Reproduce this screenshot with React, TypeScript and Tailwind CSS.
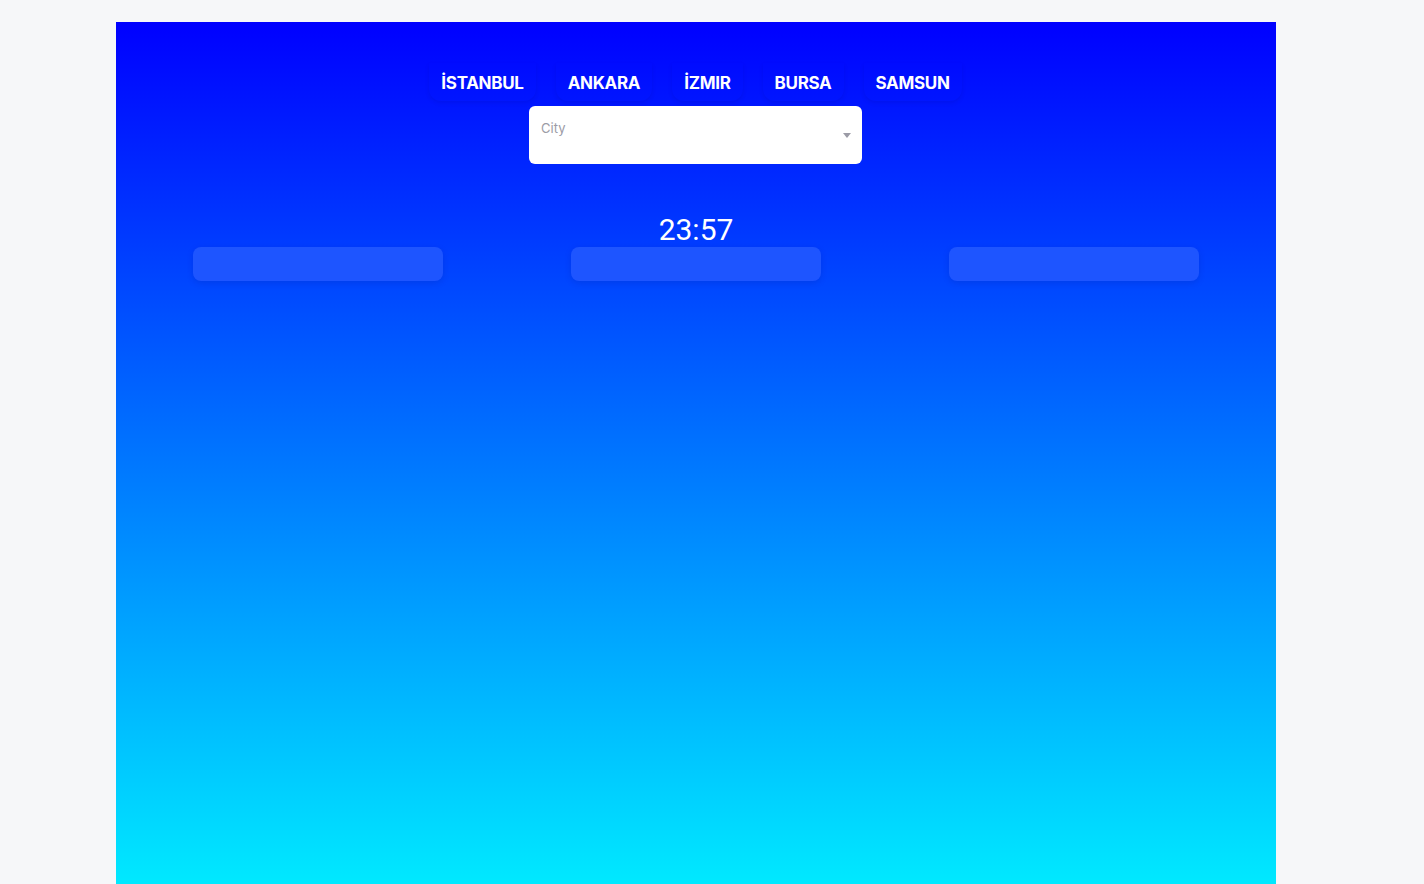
const cities = ["İSTANBUL", "ANKARA", "İZMIR", "BURSA", "SAMSUN"];

function CityTabs() {
    return (
        <div className="flex items-end justify-center gap-[20px]">
            {cities.map((city) => (
                <button
                    key={city}
                    className="rounded-b-xl px-[12px] pt-[8px] pb-[6px] text-[17px] font-bold leading-[24px] tracking-[-0.3px] text-white shadow-[0_2px_4px_rgba(0,0,90,0.1)]"
                >
                    {city}
                </button>
            ))}
        </div>
    );
}

function CitySelect() {
    return (
        <div className="relative mt-[5px] h-[58px] w-[333px] rounded-md bg-white">
            <span className="absolute left-[12px] top-[14px] text-[13px] leading-[16px] text-[#9b9ba6]">City</span>
            <span className="absolute right-[11px] top-[27px] h-0 w-0 border-x-[4px] border-t-[5px] border-x-transparent border-t-[#9b9ba6]"></span>
        </div>
    );
}

export default function App() {
    return (
        <div className="min-h-screen bg-[#f6f7f9] pt-[22px] font-['Inter',sans-serif]">
            <div className="ml-[116px] flex h-[862px] w-[1160px] flex-col items-center bg-[linear-gradient(to_bottom,#0000ff,#00e9ff)] pt-[41px]">
                <div className="-ml-px flex flex-col items-center">
                    <CityTabs />
                    <CitySelect />
                </div>
                <div className="mt-[49px] font-['Roboto',sans-serif] text-[30px] leading-[34px] text-white">23:57</div>
                <div className="flex w-full justify-between px-[77px]">
                    <div className="h-[34px] w-[250px] rounded-lg bg-[#1e55ff] shadow-[0_2px_6px_rgba(0,30,150,0.2)]"></div>
                    <div className="h-[34px] w-[250px] rounded-lg bg-[#1e55ff] shadow-[0_2px_6px_rgba(0,30,150,0.2)]"></div>
                    <div className="h-[34px] w-[250px] rounded-lg bg-[#1e55ff] shadow-[0_2px_6px_rgba(0,30,150,0.2)]"></div>
                </div>
            </div>
        </div>
    );
}
